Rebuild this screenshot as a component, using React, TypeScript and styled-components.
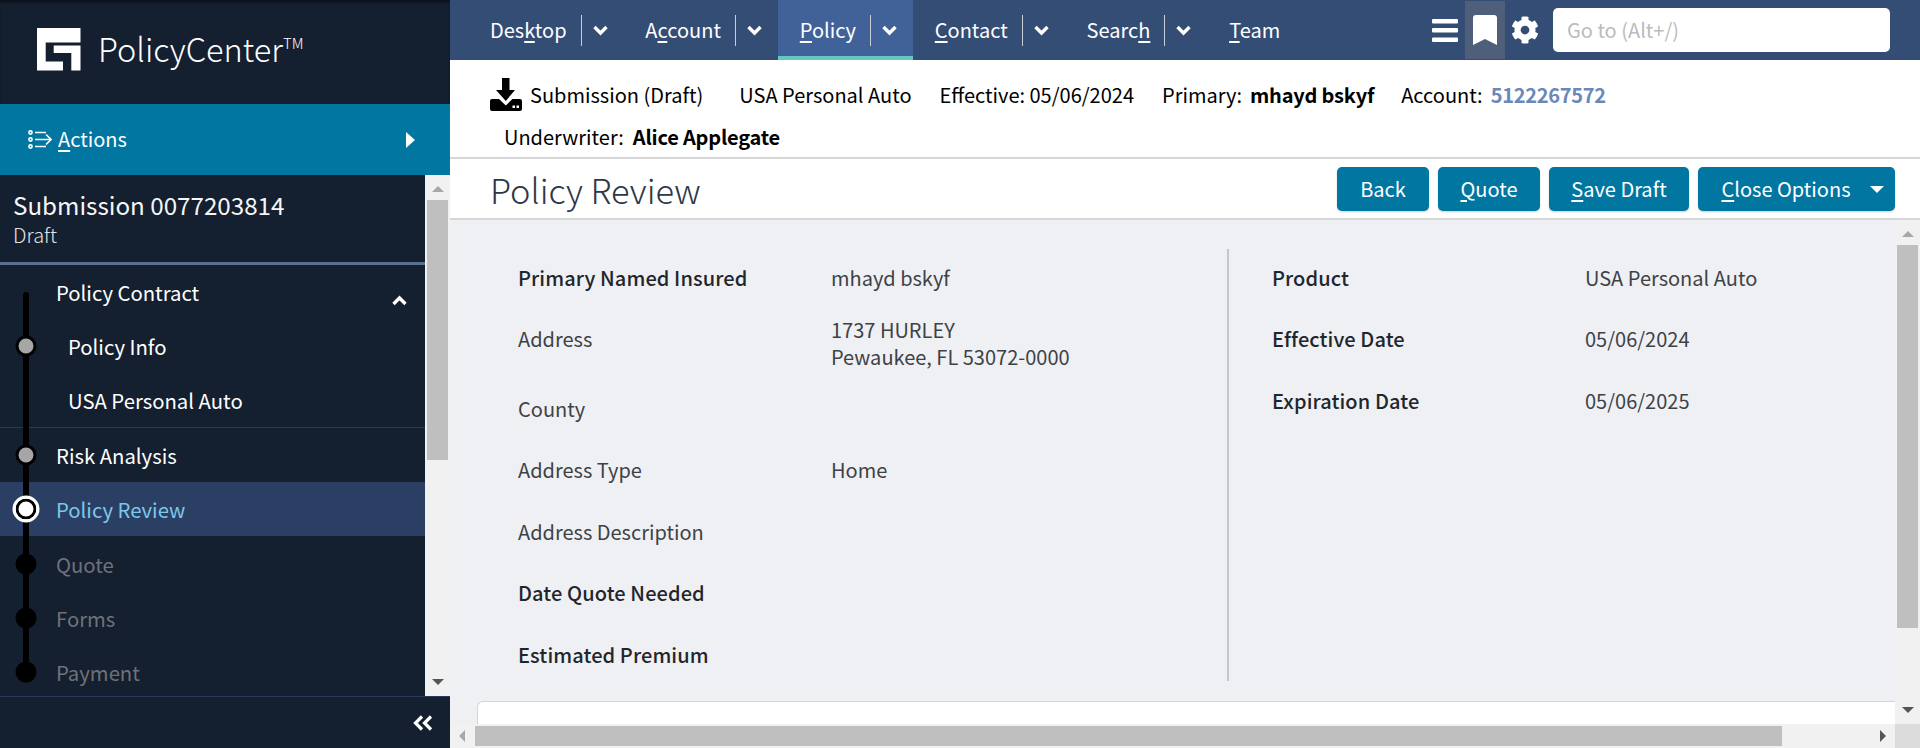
import React from "react";
import styled, { createGlobalStyle } from "styled-components";
import { FaCog } from "react-icons/fa";

const Global = createGlobalStyle`
  html, body { margin: 0; padding: 0; height: 100%; overflow: hidden; }
  body { font-family: "Noto Sans CJK SC", "Noto Sans", sans-serif; font-size: 20px; color: #2c2f33; }
  * { box-sizing: border-box; }
`;

const Page = styled.div`display: flex; width: 1920px; height: 748px; overflow: hidden;`;
const Sidebar = styled.aside`width: 450px; flex: none; display: flex; flex-direction: column; background: #141f30; color: #fff;`;
const LogoBar = styled.div`height: 104px; flex: none; display: flex; align-items: flex-start; gap: 17px; padding: 28px 0 0 37px; box-shadow: inset 0 3px 3px -1px rgba(0,0,0,.5);`;
const LogoText = styled.div`font-size: 32.500px; font-weight: 300; line-height: 40px; color: #fff; sup { font-size: 15px; font-weight: 300; line-height: 0; vertical-align: 13px; }`;
const ActionsBar = styled.div`height: 71px; flex: none; display: flex; align-items: center; background: #0076a1; padding: 0 35px 0 28px; font-size: 20px; gap: 6px;`;
const ActionsLabel = styled.span`padding-bottom: 2px;`;
const Grow = styled.span`flex: 1;`;
const Key = styled.span`text-decoration: underline; text-underline-offset: 3px; text-decoration-thickness: 1.5px;`;
const SideMiddle = styled.div`flex: 1; min-height: 0; display: flex;`;
const SideScroll = styled.div`flex: 1; min-width: 0; display: flex; flex-direction: column; overflow: hidden;`;
const SideHead = styled.div`height: 90px; flex: none; padding: 14px 0 0 13px; border-bottom: 3px solid #5a7090;`;
const SideTitle = styled.div`font-size: 24.200px; line-height: 32px; font-weight: 400; color: #f6f6f6;`;
const SideSub = styled.div`font-size: 20px; line-height: 28px; font-weight: 300; color: #e4e4e4;`;
const Steps = styled.div`position: relative; flex: 1; overflow: hidden;`;
const Line = styled.div`position: absolute; z-index: 1; left: 23px; top: 27px; height: 380px; width: 6px; border-radius: 3px; background: #000;`;
const Step = styled.div<{ $indent?: boolean; $active?: boolean; $disabled?: boolean; $rule?: boolean }>`
  position: relative; height: 54.300px; display: flex; align-items: center; justify-content: space-between;
  padding: 0 18px 0 ${(p) => (p.$indent ? 68 : 56)}px; font-size: 20.300px; line-height: 28px; font-weight: 400;
  color: ${(p) => (p.$active ? "#7cc8e8" : p.$disabled ? "#6f7278" : "#fff")};
  background: ${(p) => (p.$active ? "#2a3f63" : "transparent")};
  ${(p) => (p.$rule ? "border-bottom: 1px solid #2a3a55;" : "")}
`;
const UpChevron = styled.svg`margin-top: 16px;`;
const Dot = styled.span<{ $kind: "done" | "off" | "now" }>`
  position: absolute; z-index: 2; top: 50%; transform: translate(-50%, -50%); left: 25.500px; border-radius: 50%;
  width: ${(p) => (p.$kind === "now" ? 27 : 21)}px; height: ${(p) => (p.$kind === "now" ? 27 : 21)}px;
  background: ${(p) => (p.$kind === "done" ? "#a6a6a6" : p.$kind === "now" ? "#fff" : "#000")};
  border: 3px solid ${(p) => (p.$kind === "now" ? "#fff" : "#000")};
  ${(p) => (p.$kind === "now" ? "box-shadow: inset 0 0 0 3px #000;" : "")}
`;
const SideFoot = styled.div`height: 52px; flex: none; display: flex; align-items: center; justify-content: flex-end; padding-right: 17px; border-top: 1px solid #2a3a55;`;

const VBar = styled.div`position: relative; width: 25px; flex: none; background: #f1f1f1;`;
const VThumb = styled.div<{ $top: number; $h: number }>`
  position: absolute; left: 2px; width: 21px; top: ${(p) => p.$top}px; height: ${(p) => p.$h}px; background: #bfbfbf;
`;
const Tri = styled.span<{ $dir: "up" | "down" | "left" | "right"; $c?: string }>`
  position: absolute; width: 0; height: 0;
  ${(p) => {
    const c = p.$c || "#555";
    if (p.$dir === "up") return `left: 7px; top: 11px; border-left: 6px solid transparent; border-right: 6px solid transparent; border-bottom: 6px solid ${c};`;
    if (p.$dir === "down") return `left: 7px; bottom: 11px; border-left: 6px solid transparent; border-right: 6px solid transparent; border-top: 6px solid ${c};`;
    if (p.$dir === "left") return `left: 9px; top: 6px; border-top: 6px solid transparent; border-bottom: 6px solid transparent; border-right: 6px solid ${c};`;
    return `right: 9px; top: 6px; border-top: 6px solid transparent; border-bottom: 6px solid transparent; border-left: 6px solid ${c};`;
  }}
`;

const Main = styled.main`flex: 1; min-width: 0; display: flex; flex-direction: column;`;
const TopBar = styled.nav`height: 60px; flex: none; display: flex; align-items: stretch; background: #344d75; color: #fff; padding-left: 18px; font-size: 20px;`;
const Tab = styled.div<{ $active?: boolean }>`
  display: flex; align-items: center; padding: 0 15.800px 0 22px; height: 60px; gap: 11px;
  background: ${(p) => (p.$active ? "#406299" : "transparent")};
  ${(p) => (p.$active ? "box-shadow: inset 0 -4px 0 #66c7c0;" : "")}
`;
const TabLabel = styled.span`margin-right: 3px; padding-bottom: 2px;`;
const TabSep = styled.span`width: 1px; height: 31px; background: #c9ced6;`;
const Tools = styled.div`margin-left: auto; display: flex; align-items: center; padding-right: 30px;`;
const Tool = styled.div<{ $on?: boolean }>`
  width: 40px; height: 58px; display: flex; align-items: center; justify-content: center; font-size: 28px;
  background: ${(p) => (p.$on ? "#4f5f7a" : "transparent")};
`;
const GoTo = styled.div`width: 337px; height: 44px; margin-left: 8px; background: #fff; border-radius: 5px; color: #b9bcc0; display: flex; align-items: center; padding: 0 0 2px 14px; font-size: 20px;`;

const InfoBar = styled.div`height: 99px; flex: none; background: #fff; border-bottom: 2px solid #d6d6d6; color: #000; font-size: 20px; padding: 17px 0 0 40px;`;
const InfoRow = styled.div`display: flex; align-items: center; height: 35px;`;
const InfoRow2 = styled(InfoRow)`padding-left: 14px; margin-top: 7px;`;
const InfoItem = styled.span<{ $gap?: number }>`margin-left: ${(p) => p.$gap ?? 0}px; white-space: nowrap;`;
const Strong = styled.b<{ $m?: number }>`font-weight: 700; margin-left: ${(p) => p.$m ?? 8}px; letter-spacing: -0.200px;`;
const Link = styled.b`font-weight: 700; margin-left: 8px; color: #6b88b8; letter-spacing: -0.300px;`;

const TitleBar = styled.div`height: 61px; flex: none; background: #fff; border-bottom: 2px solid #d6d6d6; display: flex; align-items: center; padding: 0 25px 0 40px; gap: 9px;`;
const PageTitle = styled.h1`margin: 0 auto 0 0; font-size: 34.400px; font-weight: 300; line-height: 46px; color: #2d3748;`;
const Btn = styled.div<{ $w: number }>`
  width: ${(p) => p.$w}px; height: 44px; margin-top: 1px; padding-bottom: 2px; border-radius: 5px; background: #0076a1; color: #fff; display: flex; align-items: center; justify-content: center; font-size: 20px; box-shadow: 0 1px 2px rgba(0,0,0,.2); gap: 19px;
`;
const Caret = styled.span`width: 0; height: 0; border-left: 7px solid transparent; border-right: 7px solid transparent; border-top: 7px solid #fff; margin: 2px -12px 0 0;`;

const Body = styled.div`flex: 1; min-height: 0; display: flex; flex-direction: column;`;
const BodyTop = styled.div`flex: 1; min-height: 0; display: flex;`;
const Content = styled.div`flex: 1; min-width: 0; background: #eff0f4; display: flex; flex-direction: column; overflow: hidden;`;
const Columns = styled.div`flex: 1; display: flex; padding: 29px 0 0 68px;`;
const Col = styled.div<{ $rule?: boolean }>`
  width: ${(p) => (p.$rule ? 711 : 600)}px; height: 432px; padding-left: ${(p) => (p.$rule ? 0 : 43)}px;
  ${(p) => (p.$rule ? "border-right: 2px solid #c4c6ca;" : "")}
`;
const Row = styled.div<{ $h?: number }>`display: flex; height: ${(p) => p.$h ?? 61.5}px; align-items: flex-start; padding-top: 15px;`;
const Label = styled.div<{ $b?: boolean }>`width: 313px; flex: none; line-height: 28px; font-weight: ${(p) => (p.$b ? 500 : 400)}; color: ${(p) => (p.$b ? "#22262b" : "#3e4247")}; letter-spacing: ${(p) => (p.$b ? "0.1px" : "0")};`;
const Value = styled.div<{ $up?: boolean }>`line-height: ${(p) => (p.$up ? 27 : 28)}px; color: #3e4247; ${(p) => (p.$up ? "margin-top: -9px;" : "")}`;
const LowerCard = styled.div`height: 23px; flex: none; margin-left: 27px; background: #fff; border: 1px solid #d4d5d9; border-bottom: 0; border-right: 0; border-radius: 6px 0 0 0;`;
const HBar = styled.div`height: 24px; flex: none; display: flex; background: #f1f1f1;`;
const HTrack = styled.div`position: relative; flex: 1;`;
const HThumb = styled.div`position: absolute; left: 25px; top: 2px; bottom: 2px; width: 1307px; background: #bfbfbf;`;
const Corner = styled.div`width: 25px; flex: none; background: #dcdcdc;`;

const Logo = () => (
  <svg width="44" height="43" viewBox="0 0 44 43">
    <path fill="#fff" d="M0 0H43.500V14.500H8.700V33.500H26V42.500H0Z" />
    <path fill="#fff" d="M16.700 17.500H43.500V42.500H34.300V25H16.700Z" />
  </svg>
);
const ActionsIcon = () => (
  <svg width="24" height="19" viewBox="0 0 24 19" fill="none" stroke="#fff" strokeWidth="1.600">
    <circle cx="2.500" cy="2.500" r="1.600" />
    <circle cx="2.500" cy="9.500" r="1.600" />
    <circle cx="2.500" cy="16.500" r="1.600" />
    <path d="M7 2.500h11M7 9.500h16M7 16.500h11M18 4.500l5 5-5 5" />
  </svg>
);
const DownloadIcon = () => (
  <svg width="32" height="33" viewBox="0 0 32 33">
    <path fill="#000" d="M12 0h7.500v12H25L15.800 23 6 12h6z" />
    <path fill="#000" d="M2 21h7l6.800 6.500L22.500 21H30a2 2 0 0 1 2 2v8a2 2 0 0 1-2 2H2a2 2 0 0 1-2-2v-8a2 2 0 0 1 2-2z" />
    <path fill="#fff" d="M22.500 27.500h2.500v2.500h-2.500zM26.500 27.500H29v2.500h-2.500z" />
  </svg>
);
const ChevronDown = () => (
  <svg width="15" height="11" viewBox="0 0 15 11" fill="none" stroke="#fff" strokeWidth="3.400">
    <path d="M1.500 2l6 6 6-6" />
  </svg>
);
const DoubleLeft = () => (
  <svg width="20" height="16" viewBox="0 0 20 16" fill="none" stroke="#fff" strokeWidth="3.200">
    <path d="M9 1.500L2.500 8 9 14.500M18 1.500L11.500 8 18 14.500" />
  </svg>
);
const BarsIcon = () => (
  <svg width="26" height="23" viewBox="0 0 26 23" fill="#fff">
    <rect width="26" height="4.500" y="0" rx="1" />
    <rect width="26" height="4.500" y="9" rx="1" />
    <rect width="26" height="4.500" y="18.500" rx="1" />
  </svg>
);
const BookmarkIcon = () => (
  <svg width="24" height="30" viewBox="0 0 24 30" fill="#fff">
    <path d="M3 0h18a3 3 0 0 1 3 3v27l-12-6-12 6V3a3 3 0 0 1 3-3z" />
  </svg>
);

export default function App() {
  return (
    <Page>
      <Global />
      <Sidebar>
        <LogoBar>
          <Logo />
          <LogoText>PolicyCenter<sup>TM</sup></LogoText>
        </LogoBar>
        <ActionsBar>
          <ActionsIcon />
          <ActionsLabel><Key>A</Key>ctions</ActionsLabel>
          <Grow />
          <svg width="9" height="16" viewBox="0 0 9 16"><path fill="#fff" d="M0 0l9 8-9 8z" /></svg>
        </ActionsBar>
        <SideMiddle>
          <SideScroll>
            <SideHead>
              <SideTitle>Submission 0077203814</SideTitle>
              <SideSub>Draft</SideSub>
            </SideHead>
            <Steps>
              <Line />
              <Step>Policy Contract
                <UpChevron width="15" height="11" viewBox="0 0 15 11" fill="none" stroke="#fff" strokeWidth="3.400"><path d="M1.500 9l6-6 6 6" /></UpChevron>
              </Step>
              <Step $indent><Dot $kind="done" />Policy Info</Step>
              <Step $indent $rule>USA Personal Auto</Step>
              <Step><Dot $kind="done" />Risk Analysis</Step>
              <Step $active><Dot $kind="now" />Policy Review</Step>
              <Step $disabled><Dot $kind="off" />Quote</Step>
              <Step $disabled><Dot $kind="off" />Forms</Step>
              <Step $disabled><Dot $kind="off" />Payment</Step>
            </Steps>
          </SideScroll>
          <VBar>
            <Tri $dir="up" $c="#a8a8a8" />
            <VThumb $top={25} $h={260} />
            <Tri $dir="down" />
          </VBar>
        </SideMiddle>
        <SideFoot><DoubleLeft /></SideFoot>
      </Sidebar>
      <Main>
        <TopBar>
          <Tab><TabLabel>Des<Key>k</Key>top</TabLabel><TabSep /><ChevronDown /></Tab>
          <Tab><TabLabel>A<Key>c</Key>count</TabLabel><TabSep /><ChevronDown /></Tab>
          <Tab $active><TabLabel><Key>P</Key>olicy</TabLabel><TabSep /><ChevronDown /></Tab>
          <Tab><TabLabel><Key>C</Key>ontact</TabLabel><TabSep /><ChevronDown /></Tab>
          <Tab><TabLabel>Searc<Key>h</Key></TabLabel><TabSep /><ChevronDown /></Tab>
          <Tab><TabLabel><Key>T</Key>eam</TabLabel></Tab>
          <Tools>
            <Tool><BarsIcon /></Tool>
            <Tool $on><BookmarkIcon /></Tool>
            <Tool><FaCog /></Tool>
            <GoTo>Go to (Alt+/)</GoTo>
          </Tools>
        </TopBar>
        <InfoBar>
          <InfoRow>
            <DownloadIcon />
            <InfoItem $gap={8}>Submission (Draft)</InfoItem>
            <InfoItem $gap={36}>USA Personal Auto</InfoItem>
            <InfoItem $gap={28}>Effective: 05/06/2024</InfoItem>
            <InfoItem $gap={28}>Primary:<Strong>mhayd bskyf</Strong></InfoItem>
            <InfoItem $gap={27}>Account:<Link>5122267572</Link></InfoItem>
          </InfoRow>
          <InfoRow2>
            <InfoItem>Underwriter:<Strong $m={9}>Alice Applegate</Strong></InfoItem>
          </InfoRow2>
        </InfoBar>
        <TitleBar>
          <PageTitle>Policy Review</PageTitle>
          <Btn $w={92}>Back</Btn>
          <Btn $w={102}><span><Key>Q</Key>uote</span></Btn>
          <Btn $w={140}><span><Key>S</Key>ave Draft</span></Btn>
          <Btn $w={197}><span><Key>C</Key>lose Options</span><Caret /></Btn>
        </TitleBar>
        <Body>
          <BodyTop>
            <Content>
              <Columns>
                <Col $rule>
                  <Row $h={60.5}><Label $b>Primary Named Insured</Label><Value>mhayd bskyf</Value></Row>
                  <Row $h={70}><Label>Address</Label><Value $up>1737 HURLEY<br />Pewaukee, FL 53072-0000</Value></Row>
                  <Row><Label>County</Label></Row>
                  <Row><Label>Address Type</Label><Value>Home</Value></Row>
                  <Row><Label>Address Description</Label></Row>
                  <Row><Label $b>Date Quote Needed</Label></Row>
                  <Row><Label $b>Estimated Premium</Label></Row>
                </Col>
                <Col>
                  <Row $h={60.5}><Label $b>Product</Label><Value>USA Personal Auto</Value></Row>
                  <Row $h={62.5}><Label $b>Effective Date</Label><Value>05/06/2024</Value></Row>
                  <Row><Label $b>Expiration Date</Label><Value>05/06/2025</Value></Row>
                </Col>
              </Columns>
              <LowerCard />
            </Content>
            <VBar>
              <Tri $dir="up" $c="#a8a8a8" />
              <VThumb $top={25} $h={383} />
              <Tri $dir="down" />
            </VBar>
          </BodyTop>
          <HBar>
            <HTrack>
              <Tri $dir="left" $c="#a8a8a8" />
              <HThumb />
              <Tri $dir="right" />
            </HTrack>
            <Corner />
          </HBar>
        </Body>
      </Main>
    </Page>
  );
}
